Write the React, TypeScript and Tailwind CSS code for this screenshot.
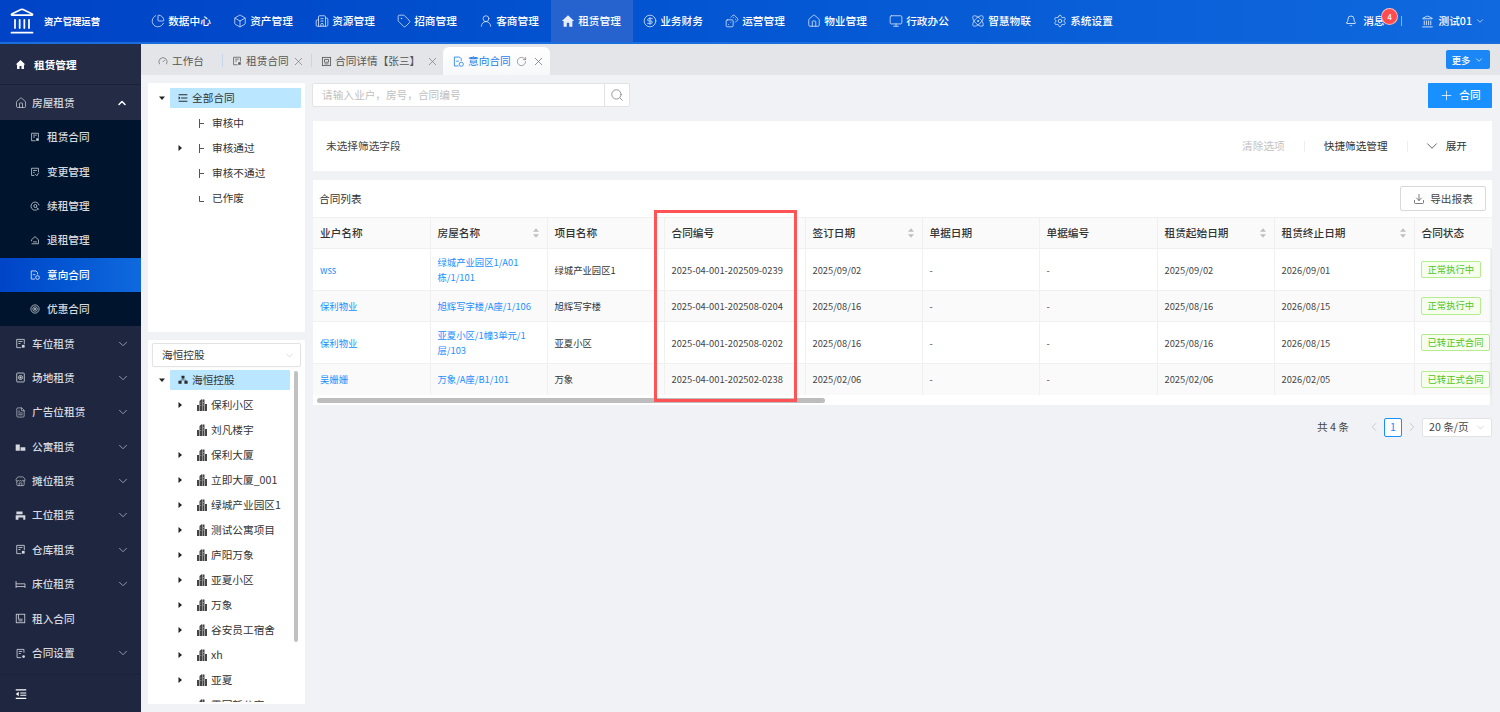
import React from 'react';
import {
  Bell,
  Box,
  Building2,
  ChartPie,
  ChevronDown,
  ChevronLeft,
  ChevronRight,
  ChevronUp,
  CircleDollarSign,
  Dices,
  Download,
  FileText,
  House,
  Landmark,
  Monitor,
  Plus,
  RotateCw,
  Search,
  Settings,
  Store,
  Tag,
  UserRound,
  X,
  Atom,
  Gauge,
} from 'lucide-react';

type IconProps = { className?: string; strokeWidth?: number };
type IconType = React.ComponentType<IconProps>;

// small outline icons that the icon packages don't have
const Outline = ({ className, children }: { className?: string; children: React.ReactNode }) => (
  <svg viewBox="0 0 16 16" className={className} fill="none" stroke="currentColor" strokeWidth="1.2">
    {children}
  </svg>
);

const HomeFill = ({ className }: IconProps) => (
  <svg viewBox="0 0 16 16" className={className} fill="currentColor">
    <path d="M8 1.5 1 8h2v6.5h3.6V10h2.8v4.5H13V8h2z" />
  </svg>
);

const DocCorner = ({ className }: IconProps) => (
  <Outline className={className}>
    <path d="M9 14H2.5V2h11v7" />
    <path d="M5 5h6M5 8h3" />
    <path d="M10 10h4v4h-4z" fill="currentColor" stroke="none" />
  </Outline>
);

const DocFold = ({ className }: IconProps) => (
  <Outline className={className}>
    <path d="M7 13.5H2.5V2h11v6" />
    <path d="M5 5.5h6M5 8.5h2.5" />
    <path d="m8 11 3 3 3-5" />
  </Outline>
);

const Renew = ({ className }: IconProps) => (
  <Outline className={className}>
    <path d="M13 12.5A6.5 6.5 0 1 1 14.5 7" />
    <circle cx="8.5" cy="8" r="2.4" />
    <path d="m10.5 10.5 4 3" />
  </Outline>
);

const RoofFlat = ({ className }: IconProps) => (
  <Outline className={className}>
    <path d="M2.5 14h11V7.5L8 2.5l-5.5 5v2.5" />
    <path d="M5 11h6" />
  </Outline>
);

const DocRound = ({ className }: IconProps) => (
  <Outline className={className}>
    <path d="M8 14.5H2V1.5h7.5l2.5 2.5v3" />
    <path d="M4.5 7.5h4" />
    <circle cx="12" cy="12" r="3" />
  </Outline>
);

const Coupon = ({ className }: IconProps) => (
  <Outline className={className}>
    <circle cx="8" cy="8" r="6.6" />
    <circle cx="8" cy="8" r="3.6" />
    <path d="M6.5 7.2h3M6.5 8.8h3" />
  </Outline>
);

const DocTarget = ({ className }: IconProps) => (
  <Outline className={className}>
    <rect x="2.5" y="1.5" width="11" height="13" rx="1" />
    <circle cx="8" cy="8" r="3" />
    <circle cx="8" cy="8" r="1" fill="currentColor" />
  </Outline>
);

const FlatBlocks = ({ className }: IconProps) => (
  <svg viewBox="0 0 16 16" className={className} fill="currentColor">
    <path d="M1 5h6v9H1zM8 9h7v5H8z" />
  </svg>
);

const Desk = ({ className }: IconProps) => (
  <svg viewBox="0 0 16 16" className={className} fill="currentColor">
    <path d="M2 2h9v4H2zM1 7.5h14V14h-3v-3H5v3H1z" />
  </svg>
);

const Bed = ({ className }: IconProps) => (
  <Outline className={className}>
    <path d="M1.5 3v10M14.5 7v6M1.5 7h13M1.5 11h13" />
  </Outline>
);

const LeaseIn = ({ className }: IconProps) => (
  <Outline className={className}>
    <rect x="1.8" y="1.8" width="12.4" height="12.4" />
    <path d="M5 2v7h6M5 11.5h6" />
  </Outline>
);

const DocDot = ({ className }: IconProps) => (
  <Outline className={className}>
    <path d="M13 7V2H3v12h6" />
    <path d="M5.5 5h5M5.5 8h3" />
    <circle cx="12.5" cy="12.5" r="2" fill="currentColor" stroke="none" />
  </Outline>
);

const DocLines = ({ className }: IconProps) => (
  <Outline className={className}>
    <rect x="2" y="2" width="12" height="12" />
    <path d="M5 5h6v4H5zM5 11.5h6" />
  </Outline>
);

const Collapse = ({ className }: IconProps) => (
  <svg viewBox="0 0 16 16" className={className} fill="currentColor">
    <path d="M1 1.5h14v1.7H1zM7 6h8v1.4H7zM7 9h8v1.4H7zM1 13h14v1.7H1zM5 5v6L1 8z" />
  </svg>
);

const Stack = ({ className }: IconProps) => (
  <svg viewBox="0 0 16 16" className={className} fill="#2b2b2b">
    <path d="M1 2h14v1.7H1zM5 7h10v1.7H5zM1 12.4h14V14H1zM1 5l3 2.8L1 10.6z" />
  </svg>
);

const Tower = ({ className }: { className?: string }) => (
  <svg viewBox="0 0 10 12" className={className} fill="#444">
    <path d="M0 6h2v6H0zM2.5 2 5 0v12H2.5zM5.4 .5h2.1V12H5.4zM8 5h2v7H8z" />
    <path d="M3.4 3.5h.8v1h-.8zM3.4 6h.8v1h-.8zM6 3h.8v1H6zM6 5.5h.8v1H6z" fill="#aaa" />
  </svg>
);

const Org = ({ className }: { className?: string }) => (
  <svg viewBox="0 0 12 12" className={className} fill="#2b2b2b">
    <path d="M4.2 1h3.6v3.2H4.2zM.5 7h3.8v3.6H.5zM7.7 7h3.8v3.6H7.7z" />
    <path d="M5.6 4h.8v1.6h3.5V7h-.8v-.7H3.9V7h-.8V5.6h2.5z" />
  </svg>
);

const Caret = ({ open }: { open?: boolean }) => (
  <svg viewBox="0 0 6 6" className="h-[6px] w-[6px] text-[#222]" fill="currentColor">
    {open ? <path d="M0 1.5h6L3 5z" /> : <path d="M1.5 0v6L5 3z" />}
  </svg>
);

const Sort = () => (
  <svg viewBox="0 0 7 11" className="h-[10px] w-[6px] text-[#bfbfbf]" fill="currentColor">
    <path d="M3.5 0 7 4H0zM3.5 11 0 7h7z" />
  </svg>
);

// tree guide, "├" for middle rows and "└" for the last one
const Guide = ({ last }: { last?: boolean }) => (
  <svg viewBox="0 0 6 9" className="h-[9px] w-[6px] text-[#555]" fill="none" stroke="currentColor" strokeWidth="1">
    {last ? <path d="M.5 2v5.5H5" /> : <path d="M.5 0v9M.5 4.5H5" />}
  </svg>
);

const navItems: { label: string; icon: IconType; active?: boolean }[] = [
  { label: '数据中心', icon: ChartPie },
  { label: '资产管理', icon: Box },
  { label: '资源管理', icon: Building2 },
  { label: '招商管理', icon: Tag },
  { label: '客商管理', icon: UserRound },
  { label: '租赁管理', icon: HomeFill, active: true },
  { label: '业务财务', icon: CircleDollarSign },
  { label: '运营管理', icon: Dices },
  { label: '物业管理', icon: House },
  { label: '行政办公', icon: Monitor },
  { label: '智慧物联', icon: Atom },
  { label: '系统设置', icon: Settings },
];

const subMenu: { label: string; icon: IconType; active?: boolean }[] = [
  { label: '租赁合同', icon: DocCorner },
  { label: '变更管理', icon: DocFold },
  { label: '续租管理', icon: Renew },
  { label: '退租管理', icon: RoofFlat },
  { label: '意向合同', icon: DocRound, active: true },
  { label: '优惠合同', icon: Coupon },
];

const lowerMenu: { label: string; icon: IconType; arrow?: boolean }[] = [
  { label: '车位租赁', icon: DocCorner, arrow: true },
  { label: '场地租赁', icon: DocTarget, arrow: true },
  { label: '广告位租赁', icon: FileText, arrow: true },
  { label: '公寓租赁', icon: FlatBlocks, arrow: true },
  { label: '摊位租赁', icon: Store, arrow: true },
  { label: '工位租赁', icon: Desk, arrow: true },
  { label: '仓库租赁', icon: DocCorner, arrow: true },
  { label: '床位租赁', icon: Bed, arrow: true },
  { label: '租入合同', icon: LeaseIn },
  { label: '合同设置', icon: DocDot, arrow: true },
];

const statusTree = [
  { label: '审核中' },
  { label: '审核通过', caret: true },
  { label: '审核不通过' },
  { label: '已作废', last: true },
];

const projects = [
  { label: '保利小区', caret: true },
  { label: '刘凡楼宇' },
  { label: '保利大厦', caret: true },
  { label: '立即大厦_001', caret: true },
  { label: '绿城产业园区1', caret: true },
  { label: '测试公寓项目', caret: true },
  { label: '庐阳万象', caret: true },
  { label: '亚夏小区', caret: true },
  { label: '万象', caret: true },
  { label: '谷安员工宿舍', caret: true },
  { label: 'xh', caret: true },
  { label: '亚夏', caret: true },
  { label: '霞回新公寓', caret: true },
];

const columns = [
  { title: '业户名称', width: 117 },
  { title: '房屋名称', width: 117, sort: true },
  { title: '项目名称', width: 117 },
  { title: '合同编号', width: 141 },
  { title: '签订日期', width: 117, sort: true },
  { title: '单据日期', width: 117 },
  { title: '单据编号', width: 118 },
  { title: '租赁起始日期', width: 117, sort: true },
  { title: '租赁终止日期', width: 140, sort: true },
  { title: '合同状态', width: 120 },
];

const rows = [
  {
    owner: 'wss',
    house: ['绿城产业园区1/A01', '栋/1/101'],
    project: '绿城产业园区1',
    no: '2025-04-001-202509-0239',
    signed: '2025/09/02',
    start: '2025/09/02',
    end: '2026/09/01',
    status: '正常执行中',
    height: 'h-[42px]',
  },
  {
    owner: '保利物业',
    house: ['旭辉写字楼/A座/1/106'],
    project: '旭辉写字楼',
    no: '2025-04-001-202508-0204',
    signed: '2025/08/16',
    start: '2025/08/16',
    end: '2026/08/15',
    status: '正常执行中',
    height: 'h-[31px]',
  },
  {
    owner: '保利物业',
    house: ['亚夏小区/1幢3单元/1', '层/103'],
    project: '亚夏小区',
    no: '2025-04-001-202508-0202',
    signed: '2025/08/16',
    start: '2025/08/16',
    end: '2026/08/15',
    status: '已转正式合同',
    height: 'h-[42px]',
  },
  {
    owner: '吴姗姗',
    house: ['万象/A座/B1/101'],
    project: '万象',
    no: '2025-04-001-202502-0238',
    signed: '2025/02/06',
    start: '2025/02/06',
    end: '2026/02/05',
    status: '已转正式合同',
    height: 'h-[31px]',
  },
];

const TopBar = () => (
  <header className="flex h-[44px] shrink-0 border-b-2 border-[#1a6ddc] bg-gradient-to-r from-[#0043c6] to-[#1069de] text-white">
    <div className="flex w-[141px] shrink-0 items-center pl-[8px]">
      <Landmark className="h-[28px] w-[28px]" strokeWidth={1.5} />
      <span className="ml-[8px] text-[9.33px] font-bold">资产管理运营</span>
    </div>
    <nav className="flex">
      {navItems.map((item) => (
        <div
          key={item.label}
          className={`flex w-[82px] items-center justify-center gap-[3px] pr-[2px] text-[10.67px] font-medium ${item.active ? 'bg-[#2663cf]' : ''}`}
        >
          <item.icon className="h-[14px] w-[14px] opacity-90" strokeWidth={1.3} />
          <span>{item.label}</span>
        </div>
      ))}
    </nav>
    <div className="ml-auto flex items-center pr-[15px] text-[10.67px] font-medium">
      <Bell className="h-[12px] w-[12px]" strokeWidth={1.5} />
      <div className="relative ml-[6px]">
        <span>消息</span>
        <span className="absolute left-[18px] top-[-5px] flex h-[17px] w-[17px] items-center justify-center rounded-full border border-white/60 bg-[#ff4d4f] text-[7.5px]">
          4
        </span>
      </div>
      <div className="ml-[16px] h-[10px] w-px bg-white/50" />
      <Landmark className="ml-[19px] h-[13px] w-[13px]" strokeWidth={1.4} />
      <span className="ml-[5px]">测试01</span>
      <ChevronDown className="ml-[3px] h-[10px] w-[10px]" strokeWidth={1.5} />
    </div>
  </header>
);

const SideBar = () => (
  <aside className="flex w-[141px] shrink-0 flex-col bg-[#1e2640] text-[10.67px] font-medium text-[#d5d8df]">
    <div className="flex h-[41px] shrink-0 items-center gap-[8px] bg-[#232b45] pl-[15px] font-bold text-white">
      <HomeFill className="h-[11px] w-[11px]" />
      <span>租赁管理</span>
    </div>
    <div className="flex h-[35px] shrink-0 items-center bg-[#232b45] pl-[15px] pr-[13px] shadow-[0_-1px_0_#1b2136]">
      <House className="h-[12px] w-[12px]" strokeWidth={1.4} />
      <span className="ml-[5px]">房屋租赁</span>
      <ChevronUp className="ml-auto h-[12px] w-[12px] text-white" strokeWidth={3} />
    </div>
    <div className="shrink-0 bg-[#00152d]">
      {subMenu.map((item) => (
        <div
          key={item.label}
          className={`flex h-[34.4px] items-center gap-[7px] pl-[30px] ${item.active ? 'bg-gradient-to-r from-[#0044c7] to-[#1069de] text-white' : ''}`}
        >
          <item.icon className="h-[10px] w-[10px]" strokeWidth={1.4} />
          <span>{item.label}</span>
        </div>
      ))}
    </div>
    {lowerMenu.map((item) => (
      <div key={item.label} className="flex h-[34.4px] shrink-0 items-center pl-[15px] pr-[11px]">
        <item.icon className="h-[11px] w-[11px]" strokeWidth={1.4} />
        <span className="ml-[6px]">{item.label}</span>
        {item.arrow && <ChevronDown className="ml-auto h-[14px] w-[14px] text-[#9aa0ae]" strokeWidth={1.6} />}
      </div>
    ))}
    <div className="mt-auto flex h-[38px] items-center border-t border-[#1b2238] pl-[15px]">
      <Collapse className="h-[12px] w-[12px] text-white" />
    </div>
  </aside>
);

const TabBar = () => (
  <div className="flex h-[31px] shrink-0 items-end bg-[#e4e5e8] text-[10.67px] text-[#555]">
    <div className="flex h-[28px] w-[81px] items-center pl-[17px]">
      <Gauge className="h-[10px] w-[10px]" strokeWidth={1.5} />
      <span className="ml-[4px]">工作台</span>
    </div>
    <div className="mb-[8px] h-[13px] w-px bg-[#c5d5ea]" />
    <div className="flex h-[28px] w-[88px] items-center pl-[9px]">
      <DocCorner className="h-[10px] w-[10px]" />
      <span className="ml-[4px]">租赁合同</span>
      <X className="ml-[3px] h-[13px] w-[13px] text-[#777]" strokeWidth={1.3} />
    </div>
    <div className="mb-[8px] h-[13px] w-px bg-[#c5d5ea]" />
    <div className="flex h-[28px] w-[131px] items-center pl-[9px]">
      <DocLines className="h-[11px] w-[11px]" />
      <span className="ml-[3px]">合同详情【张三】</span>
      <X className="ml-[6px] h-[13px] w-[13px] text-[#777]" strokeWidth={1.3} />
    </div>
    <div className="flex h-[28px] w-[107px] items-center rounded-t-[6px] bg-gradient-to-b from-white to-[#f7f8fa] pl-[10px] text-[#1d7fe8]">
      <DocRound className="h-[11px] w-[11px]" />
      <span className="ml-[4px]">意向合同</span>
      <RotateCw className="ml-[5px] h-[11px] w-[11px] text-[#666]" strokeWidth={1.3} />
      <X className="ml-[5px] h-[13px] w-[13px] text-[#666]" strokeWidth={1.3} />
    </div>
    <div className="mb-[6px] ml-auto mr-[10px] flex h-[19px] w-[44px] items-center justify-center gap-[4px] rounded-[2px] bg-[#1b86f5] text-[9.33px] font-medium text-white">
      <span>更多</span>
      <ChevronDown className="h-[10px] w-[10px]" strokeWidth={1.6} />
    </div>
  </div>
);

const TreePanels = () => (
  <div className="flex w-[157px] shrink-0 flex-col gap-[8px] text-[10.67px] text-[#333]">
    <div className="h-[249px] shrink-0 bg-white pt-[5px]">
      <div className="flex h-[20px] items-center">
        <span className="flex w-[22px] justify-end pr-[5px]">
          <Caret open />
        </span>
        <div className="flex h-[20px] w-[131px] items-center rounded-[1px] bg-[#bae7ff] pl-[8px]">
          <Stack className="h-[10px] w-[10px]" />
          <span className="ml-[4px]">全部合同</span>
        </div>
      </div>
      <div className="mt-[2.5px]">
        {statusTree.map((row) => (
          <div key={row.label} className="flex h-[25px] items-center">
            <span className="flex w-[40px] justify-end pr-[5px]">{row.caret && <Caret />}</span>
            <span className="ml-[11px] flex w-[13px]">
              <Guide last={row.last} />
            </span>
            <span>{row.label}</span>
          </div>
        ))}
      </div>
    </div>
    <div className="relative min-h-0 flex-1 overflow-hidden bg-white px-[4px] pt-[3px]">
      <div className="flex h-[24px] w-[149px] items-center justify-between rounded-[2px] border border-[#e3e3e3] pl-[9px] pr-[5px] shadow-[0_0_1px_#ddd]">
        <span>海恒控股</span>
        <ChevronDown className="h-[11px] w-[11px] text-[#bbb]" strokeWidth={1.2} />
      </div>
      <div className="-ml-[4px] mt-[3px] h-[332px] overflow-hidden">
        <div className="flex h-[20px] items-center">
          <span className="flex w-[22px] justify-end pr-[5px]">
            <Caret open />
          </span>
          <div className="flex h-[20px] w-[120px] items-center rounded-[1px] bg-[#bae7ff] pl-[8px]">
            <Org className="h-[10px] w-[10px]" />
            <span className="ml-[4px]">海恒控股</span>
          </div>
        </div>
        <div className="mt-[2.5px]">
          {projects.map((row) => (
            <div key={row.label} className="flex h-[25px] items-center">
              <span className="flex w-[40px] justify-end pr-[5px]">{row.caret && <Caret />}</span>
              <Tower className="ml-[9px] h-[12px] w-[10px]" />
              <span className="ml-[4px] whitespace-nowrap">{row.label}</span>
            </div>
          ))}
        </div>
      </div>
      <div className="absolute left-[146px] top-[31px] h-[271px] w-[4px] rounded-full bg-[#c1c1c1]" />
    </div>
  </div>
);

const ContractTable = () => (
  <div className="relative ml-px mt-[9px] h-[225px] shrink-0 bg-white">
    <div className="flex h-[37px] items-center justify-between pl-[6px] pr-[6px]">
      <span className="text-[10.67px] text-[#333]">合同列表</span>
      <div className="flex h-[25px] w-[86px] items-center justify-center gap-[5px] rounded-[2px] border border-[#d9d9d9] text-[10.67px] text-[#444]">
        <Download className="h-[12px] w-[12px]" strokeWidth={1.4} />
        <span>导出报表</span>
      </div>
    </div>
    <div className="overflow-hidden">
      <table className="table-fixed border-collapse text-[9.33px] text-[#444]" style={{ width: 1220 }}>
        <colgroup>
          {columns.map((c) => (
            <col key={c.title} style={{ width: c.width }} />
          ))}
        </colgroup>
        <thead>
          <tr className="h-[31px] border-t border-[#f0f0f0] bg-[#fafafa] text-[10.67px] font-medium text-[#333]">
            {columns.map((c) => (
              <th key={c.title} className="border-r border-[#f0f0f0] px-[7px] text-left font-medium">
                <div className="flex items-center justify-between pr-[1px]">
                  <span>{c.title}</span>
                  {c.sort && <Sort />}
                </div>
              </th>
            ))}
          </tr>
        </thead>
        <tbody>
          {rows.map((r, i) => (
            <tr key={r.no} className={`${r.height} border-t border-[#f0f0f0] ${i % 2 ? 'bg-[#fafafa]' : 'bg-white'}`}>
              <td className="border-r border-[#f0f0f0] px-[7px] text-[#1890ff]">{r.owner}</td>
              <td className="border-r border-[#f0f0f0] px-[7px] leading-[15px] text-[#1890ff]">
                {r.house.map((line) => (
                  <div key={line} className="whitespace-nowrap">
                    {line}
                  </div>
                ))}
              </td>
              <td className="border-r border-[#f0f0f0] px-[7px] text-[#333]">{r.project}</td>
              <td className="border-r border-[#f0f0f0] px-[7px]">{r.no}</td>
              <td className="border-r border-[#f0f0f0] px-[7px]">{r.signed}</td>
              <td className="border-r border-[#f0f0f0] px-[7px]">-</td>
              <td className="border-r border-[#f0f0f0] px-[7px]">-</td>
              <td className="border-r border-[#f0f0f0] px-[7px]">{r.start}</td>
              <td className="border-r border-[#f0f0f0] px-[7px]">{r.end}</td>
              <td className="pl-[6px]">
                <span className="inline-block whitespace-nowrap rounded-[2px] border border-[#b7eb8f] bg-[#f6ffed] px-[6px] text-[9.33px] leading-[15.5px] text-[#52c41a]">
                  {r.status}
                </span>
              </td>
            </tr>
          ))}
        </tbody>
      </table>
    </div>
    <div className="ml-[4px] mt-[3px] h-[5px] w-[508px] rounded-full bg-[#bdbdbd]" />
    <div className="absolute bottom-0 right-0 top-[69px] w-[3px] bg-gradient-to-r from-transparent to-black/10" />
    {/* red annotation box drawn over the table */}
    <div className="pointer-events-none absolute left-[341px] top-[30px] h-[192px] w-[143px] border-[3px] border-[#ff5356]" />
  </div>
);

export default function App() {
  return (
    <div className="flex h-[712px] w-[1500px] flex-col overflow-hidden bg-[#f0f2f5] font-['Noto_Sans_CJK_SC','Noto_Sans',sans-serif]">
      <TopBar />
      <div className="flex min-h-0 flex-1">
        <SideBar />
        <main className="flex min-w-0 flex-1 flex-col">
          <TabBar />
          <div className="flex min-h-0 flex-1 gap-[7px] pb-[8px] pl-[7px] pr-[8px] pt-[8px]">
            <TreePanels />
            <div className="flex min-w-0 flex-1 flex-col">
              <div className="flex h-[24px] shrink-0 items-center justify-between">
                <div className="flex h-[24px] w-[318px] rounded-[2px] border border-[#e3e3e3] bg-white text-[10.67px] text-[#bfbfbf]">
                  <span className="flex flex-1 items-center pl-[9px]">请输入业户，房号，合同编号</span>
                  <span className="flex w-[25px] items-center justify-center border-l border-[#e3e3e3]">
                    <Search className="h-[14px] w-[14px] text-[#888]" strokeWidth={1.5} />
                  </span>
                </div>
                <div className="flex h-[25px] w-[64px] items-center justify-center gap-[5px] rounded-[1px] bg-[#1890ff] text-[10.67px] font-medium text-white">
                  <Plus className="h-[15px] w-[15px]" strokeWidth={1.2} />
                  <span>合同</span>
                </div>
              </div>
              <div className="ml-px mt-[14px] flex h-[50px] shrink-0 items-center bg-white pl-[13px] text-[10.67px] text-[#444]">
                <span>未选择筛选字段</span>
                <span className="ml-auto text-[#c2c2c2]">清除选项</span>
                <span className="mx-[19px] h-[11px] w-px bg-[#eee]" />
                <span className="text-[#333]">快捷筛选管理</span>
                <span className="ml-[19px] mr-[15px] h-[11px] w-px bg-[#eee]" />
                <ChevronDown className="h-[18px] w-[18px] text-[#444]" strokeWidth={1.1} />
                <span className="ml-[5px] mr-[25px] text-[#333]">展开</span>
              </div>
              <ContractTable />
              <div className="mt-[12px] flex h-[20px] shrink-0 items-center justify-end text-[10.67px] text-[#444]">
                <span>共 4 条</span>
                <ChevronLeft className="ml-[18px] h-[14px] w-[14px] text-[#bbb]" strokeWidth={1.3} />
                <span className="ml-[3px] flex h-[19px] w-[18px] items-center justify-center rounded-[2px] border border-[#1890ff] bg-white text-[#1890ff]">
                  1
                </span>
                <ChevronRight className="ml-[3px] h-[14px] w-[14px] text-[#bbb]" strokeWidth={1.3} />
                <div className="ml-[3px] flex h-[19px] w-[70px] items-center justify-between rounded-[2px] border border-[#e3e3e3] bg-white pl-[6px] pr-[5px]">
                  <span>20 条/页</span>
                  <ChevronDown className="h-[11px] w-[11px] text-[#bbb]" strokeWidth={1.3} />
                </div>
              </div>
            </div>
          </div>
        </main>
      </div>
    </div>
  );
}
